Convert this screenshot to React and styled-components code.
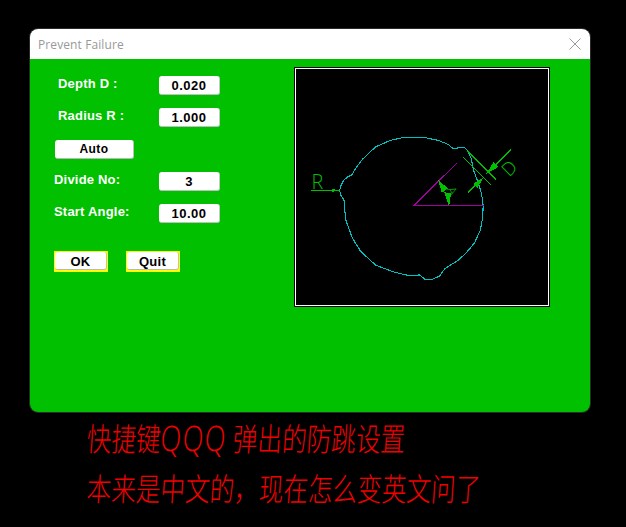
import React from 'react'
import styled, { createGlobalStyle } from 'styled-components'

const GlobalStyle = createGlobalStyle`
html, body { margin: 0; padding: 0; background: #000; }
`

const Page = styled.div`
width: 626px;
height: 527px;
padding: 29px 0 0 30px;
box-sizing: border-box;
background: #000;
overflow: hidden;
`
const Win = styled.div`
width: 560px;
height: 383px;
border-radius: 8px;
overflow: hidden;
display: flex;
flex-direction: column;
box-shadow: 0 0 0 1px #2a2a2a;
`
const TitleBar = styled.div`
height: 30px;
flex: none;
background: #fff;
display: flex;
align-items: center;
justify-content: space-between;
padding: 0 9px 0 8px;
`
const Title = styled.span`
font-family: "Open Sans", sans-serif;
font-size: 12px;
letter-spacing: 0.1px;
color: #999;
`
const CloseIcon = styled.svg`
width: 12px;
height: 12px;
stroke: #999;
stroke-width: 1;
fill: none;
`
const Body = styled.div`
flex: 1;
background: #00c000;
display: flex;
align-items: flex-start;
padding: 9px 0 0 24px;
`
const Form = styled.div`
width: 241px;
flex: none;
padding-top: 8px;
display: flex;
flex-direction: column;
gap: 13px;
`
const Row = styled.div`
display: grid;
grid-template-columns: 105px 61px;
height: 19px;
align-items: center;
`
const Label = styled.span`
padding-left: ${props => props.indent}px;
margin-top: ${props => props.lift}px;
font-family: "Liberation Sans", Arial, sans-serif;
font-size: 13px;
font-weight: bold;
letter-spacing: 0.2px;
color: #fff;
white-space: nowrap;
`
const Field = styled.input`
width: 61px;
height: 19px;
box-sizing: border-box;
padding: 0;
border: none;
border-radius: 3px;
border-right: 1px solid #c8c8c8;
border-bottom: 1px solid #c0c0c0;
outline: none;
background: #fff;
color: #000;
text-align: center;
font-family: "Liberation Sans", Arial, sans-serif;
font-size: 13px;
font-weight: bold;
letter-spacing: 0.5px;
`
const Button = styled.button`
box-sizing: border-box;
height: 100%;
padding: 0;
background: #fff;
color: #000;
border: none;
border-radius: 3px;
border-right: 1px solid #c0c0c0;
border-bottom: 1px solid #b8b8b8;
font-family: "Liberation Sans", Arial, sans-serif;
font-size: 12px;
font-weight: bold;
letter-spacing: 0.4px;
`
const AutoButton = styled(Button)`
width: 79px;
height: 19px;
margin-left: 1px;
`
const Actions = styled.div`
display: flex;
gap: 18px;
margin-top: 15px;
`
const Highlight = styled.div`
width: 54px;
height: 21px;
box-sizing: border-box;
border: 2px solid #ffff00;
border-width: 1px 1px 2px 1px;
background: #ffff00;
display: flex;
`
const ActionButton = styled(Button)`
width: 100%;
padding-top: 1px;
font-size: 13px;
letter-spacing: 0.3px;
`
const Canvas = styled.div`
width: 254px;
height: 238px;
flex: none;
box-sizing: border-box;
border: 1px solid #fff;
outline: 1px solid #000;
outline-offset: 0;
background: #000;
`
const Drawing = styled.svg`
display: block;
width: 100%;
height: 100%;
shape-rendering: crispEdges;
`
const DrawLabel = styled.text`
font-family: "Open Sans", "Liberation Sans", sans-serif;
font-weight: 300;
font-size: ${props => props.size}px;
fill: #00c000;
shape-rendering: auto;
`
const Notes = styled.div`
margin-left: 57px;
display: flex;
flex-direction: column;
gap: 20px;
padding-top: 10px;
`
const Note = styled.div`
font-family: "Noto Sans CJK SC", "Liberation Sans", sans-serif;
font-size: 24.6px;
font-weight: 300;
line-height: 30px;
height: 30px;
color: #f00000;
white-space: nowrap;
transform: scaleY(1.3) skewX(-5deg);
transform-origin: left center;
`
const Wide = styled.span`
font-family: "Open Sans", "Liberation Sans", sans-serif;
font-weight: 300;
font-size: 27px;
letter-spacing: 1.5px;
margin-right: 6px;
`

const outline = [
  [147, 392], [150, 378], [158, 362], [170, 351], [183, 345], [195, 325], [215, 298], [255, 260],
  [300, 240], [345, 230], [398, 230], [445, 240], [475, 252], [490, 265], [510, 262], [525, 262],
  [535, 272], [545, 295], [552, 330], [565, 365], [576, 400], [581, 436], [580, 470], [573, 510],
  [555, 550], [530, 580], [505, 603], [465, 628], [450, 650], [425, 661], [405, 660], [388, 647],
  [360, 650], [310, 638], [255, 617], [210, 575], [185, 535], [165, 480], [160, 420], [150, 405],
].map(p => p.join(',')).join(' ')

const guides = [
  [60, 391, 147, 391],
  [520, 290, 605, 375],
  [533, 272, 620, 358],
  [535, 398, 582, 352],
  [665, 268, 590, 342],
]
const heads = [
  '123,385 140,391 123,398',
  '445,360 474,385 456,399',
  '478,441 463,397 484,400',
  '582,352 551,371 564,384',
  '590,342 613,305 627,320',
]

const Figure = () => (
  <Drawing viewBox="15 24 762 714">
    <polygon points={outline} fill="none" stroke="#00c0c0" strokeWidth="3.3" />
    <polyline points="503,307 373,436 583,436" fill="none" stroke="#a000a0" strokeWidth="3.3" />
    {guides.map(([x1, y1, x2, y2]) => (
      <line key={`${x1}-${y1}`} x1={x1} y1={y1} x2={x2} y2={y2} stroke="#00c000" strokeWidth="3.3" />
    ))}
    {heads.map(points => <polygon key={points} points={points} fill="#00c000" />)}
    <DrawLabel size={60} x="62" y="388">R</DrawLabel>
    <DrawLabel size={56} transform="translate(660 352) rotate(-45)" x="0" y="0">D</DrawLabel>
    <DrawLabel size={40} transform="translate(484 388) rotate(62)" x="-6" y="14">A</DrawLabel>
  </Drawing>
)

const App = () => (
  <>
    <GlobalStyle />
    <Page>
      <Win>
        <TitleBar>
          <Title>Prevent Failure</Title>
          <CloseIcon viewBox="0 0 12 12">
            <path d="M0.5 0.5L11.5 11.5M11.5 0.5L0.5 11.5" />
          </CloseIcon>
        </TitleBar>
        <Body>
          <Form>
            <Row>
              <Label indent={4} lift={-5}>Depth D :</Label>
              <Field readOnly value="0.020" />
            </Row>
            <Row>
              <Label indent={4} lift={-5}>Radius R :</Label>
              <Field readOnly value="1.000" />
            </Row>
            <Row>
              <AutoButton>Auto</AutoButton>
            </Row>
            <Row>
              <Label indent={0} lift={-4}>Divide No:</Label>
              <Field readOnly value="3" />
            </Row>
            <Row>
              <Label indent={0} lift={-4}>Start Angle:</Label>
              <Field readOnly value="10.00" />
            </Row>
            <Actions>
              <Highlight><ActionButton>OK</ActionButton></Highlight>
              <Highlight><ActionButton>Quit</ActionButton></Highlight>
            </Actions>
          </Form>
          <Canvas><Figure /></Canvas>
        </Body>
      </Win>
      <Notes>
        <Note>快捷键<Wide>QQQ</Wide>弹出的防跳设置</Note>
        <Note>本来是中文的，现在怎么变英文问了</Note>
      </Notes>
    </Page>
  </>
)

export default App
